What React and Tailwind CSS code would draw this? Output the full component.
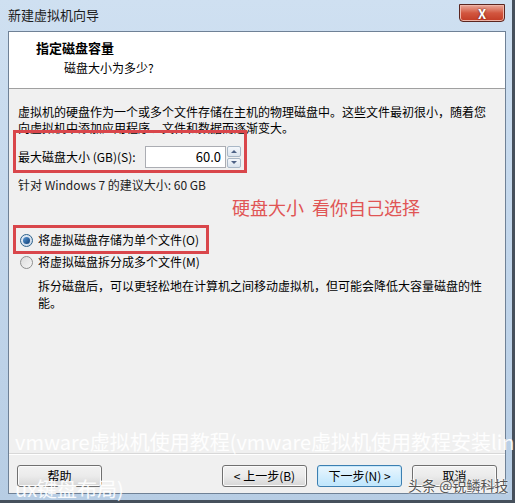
import React from 'react';

function Radio({ checked }) {
  return checked ? (
    <span className="inline-flex w-[13px] h-[13px] rounded-full border border-[#2c628b] bg-gradient-to-br from-[#e6eef7] to-[#c8d6e6] items-center justify-center">
      <span className="w-[7px] h-[7px] rounded-full bg-gradient-to-br from-[#5a9ad6] to-[#0c3d75]" />
    </span>
  ) : (
    <span className="inline-flex w-[13px] h-[13px] rounded-full border border-[#8e8f8f] bg-gradient-to-br from-[#dcdcdc] to-[#f6f6f6]" />
  );
}

function Button({ children, focused }) {
  return (
    <button
      className={
        focused
          ? 'w-[85px] h-[22px] rounded-[3px] border border-[#3c7fb1] bg-gradient-to-b from-[#eaf6fd] to-[#bee6fd] text-[12px] leading-none text-black shadow-[inset_0_0_0_1px_#c7e8fb]'
          : 'w-[85px] h-[22px] rounded-[3px] border border-[#707070] bg-gradient-to-b from-[#f2f2f2] via-[#ebebeb] to-[#d6d6d6] text-[12px] leading-none text-black shadow-[inset_0_0_0_1px_#fbfbfb]'
      }
    >
      {children}
    </button>
  );
}

export default function App() {
  return (
    <div className="relative w-[515px] h-[503px] overflow-hidden bg-gradient-to-b from-[#cfe0f1] via-[#c2d6eb] to-[#b7cde4] shadow-[inset_-3px_-3px_0_#46505c] font-['Noto_Sans_CJK_SC',sans-serif] text-[12px] text-black">
      {/* title bar */}
      <div className="h-[31px] flex items-start justify-between pl-[8px] pr-[10px]">
        <span className="mt-[6px] text-[13px] leading-[18px] text-[#1b1b1b]">新建虚拟机向导</span>
        <div className="mt-[4px] w-[46px] h-[18px] rounded-b-[4px] border border-[#5b2620] bg-gradient-to-b from-[#e9a99b] via-[#d2563f] to-[#c23a24] flex items-center justify-center shadow-[inset_0_0_0_1px_#efb5a8]">
          <span className="text-white font-bold text-[13px] leading-none [text-shadow:0_0_2px_#4a140c]">X</span>
        </div>
      </div>

      {/* client area */}
      <div className="ml-[8px] mr-[9px] h-[463px] border border-[#6f8196] bg-[#f0f0f0] flex flex-col">
        <div className="h-[57px] bg-white border-b border-[#a0a0a0] pl-[27px] pt-[7px]">
          <div className="font-bold text-[13px] leading-[18px]">指定磁盘容量</div>
          <div className="pl-[28px] mt-[2px] leading-[18px]">磁盘大小为多少?</div>
        </div>

        <div className="h-[364px] px-[9px] pt-[15px]">
          <p className="leading-[16px]">
            虚拟机的硬盘作为一个或多个文件存储在主机的物理磁盘中。这些文件最初很小，随着您
            <br />
            向虚拟机中添加应用程序、文件和数据而逐渐变大。
          </p>
          <div className="mt-[10px] flex items-center h-[22px]">
            <span className="w-[127px]">最大磁盘大小 (GB)(S):</span>
            <div className="w-[81px] h-[22px] border border-[#abadb3] bg-white flex items-center justify-end pr-[4px] text-[13px]">60.0</div>
            <div className="ml-[1px] w-[14px] h-[22px] flex flex-col gap-[1px]">
              <div className="flex-1 border border-[#a9b7c6] rounded-[2px] bg-gradient-to-b from-[#f4f7fb] to-[#dbe4ee] flex items-center justify-center">
                <span className="w-0 h-0 border-x-[3px] border-x-transparent border-b-[3px] border-b-[#4d6185]" />
              </div>
              <div className="flex-1 border border-[#a9b7c6] rounded-[2px] bg-gradient-to-b from-[#f4f7fb] to-[#dbe4ee] flex items-center justify-center">
                <span className="w-0 h-0 border-x-[3px] border-x-transparent border-t-[3px] border-t-[#4d6185]" />
              </div>
            </div>
          </div>
          <div className="mt-[9px] leading-[16px] text-[#222]">针对 Windows 7 的建议大小: 60 GB</div>

          <div className="mt-[39px] flex items-center gap-[5px] h-[16px] pl-[2px]">
            <Radio checked />
            <span>将虚拟磁盘存储为单个文件(O)</span>
          </div>
          <div className="mt-[6px] flex items-center gap-[5px] h-[16px] pl-[2px]">
            <Radio />
            <span>将虚拟磁盘拆分成多个文件(M)</span>
          </div>
          <p className="mt-[7px] pl-[20px] leading-[17px]">
            拆分磁盘后，可以更轻松地在计算机之间移动虚拟机，但可能会降低大容量磁盘的性
            <br />
            能。
          </p>
        </div>

        <div className="h-[40px] border-t border-[#d8d8d8] shadow-[inset_0_1px_0_#ffffff] flex items-start justify-between px-[8px] pt-[11px]">
          <Button>帮助</Button>
          <div className="flex gap-[10px]">
            <Button>&lt; 上一步(B)</Button>
            <Button focused>下一步(N) &gt;</Button>
            <Button>取消</Button>
          </div>
        </div>
      </div>

      {/* annotations */}
      <div className="absolute left-[13px] top-[130px] w-[234px] h-[43px] border-[3px] border-[#d9464b]" />
      <div className="absolute left-[13px] top-[225px] w-[196px] h-[29px] border-[3px] border-[#d9464b]" />
      <div className="absolute left-[232px] top-[195px] text-[18px] leading-[24px] text-[#e05555] whitespace-nowrap">硬盘大小&nbsp;&nbsp;看你自己选择</div>

      {/* watermarks */}
      <div className="absolute left-[15px] top-[428px] text-[20px] leading-[28px] text-white/90 whitespace-nowrap">
        vmware虚拟机使用教程(vmware虚拟机使用教程安装lin
      </div>
      <div className="absolute left-[15px] top-[475px] text-[20px] leading-[28px] text-white/90 whitespace-nowrap">ux键盘布局)</div>
      <div className="absolute left-[408px] top-[475px] text-[14px] leading-[20px] text-[#555] whitespace-nowrap [text-shadow:0_0_2px_#fff,0_0_2px_#fff]">
        头条 @锐鳞科技
      </div>
    </div>
  );
}
